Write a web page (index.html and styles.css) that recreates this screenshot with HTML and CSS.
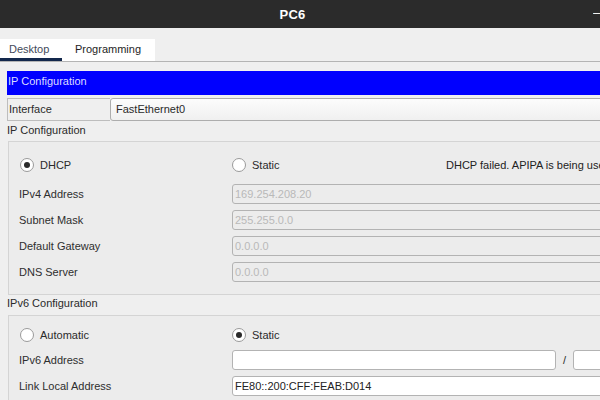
FILE: index.html
```html
<!DOCTYPE html>
<html>
<head>
<meta charset="utf-8">
<link rel="stylesheet" href="styles.css">
</head>
<body>
<div class="window">
  <div class="titlebar">
    <div class="title">PC6</div>
    <div class="minimize">–</div>
  </div>
  <div class="tabs">
    <div class="tab active">Desktop</div>
    <div class="tab">Programming</div>
  </div>
  <div class="content">
    <div class="banner">IP Configuration</div>
    <div class="iface">
      <div class="iface-label">Interface</div>
      <div class="iface-field">FastEthernet0</div>
    </div>
    <div class="section-label">IP Configuration</div>
    <div class="group g1">
      <div class="row radios">
        <label class="radio"><span class="dot checked"></span>DHCP</label>
        <label class="radio"><span class="dot"></span>Static</label>
        <span class="status">DHCP failed. APIPA is being used.</span>
      </div>
      <div class="row"><span class="lbl">IPv4 Address</span><div class="input disabled">169.254.208.20</div></div>
      <div class="row"><span class="lbl">Subnet Mask</span><div class="input disabled">255.255.0.0</div></div>
      <div class="row"><span class="lbl">Default Gateway</span><div class="input disabled">0.0.0.0</div></div>
      <div class="row"><span class="lbl">DNS Server</span><div class="input disabled">0.0.0.0</div></div>
    </div>
    <div class="section-label s2">IPv6 Configuration</div>
    <div class="group g2">
      <div class="row radios">
        <label class="radio"><span class="dot"></span>Automatic</label>
        <label class="radio"><span class="dot checked"></span>Static</label>
      </div>
      <div class="row"><span class="lbl">IPv6 Address</span>
        <div class="v6">
          <div class="input white addr"></div>
          <span class="slash">/</span>
          <div class="input white prefix"></div>
        </div>
      </div>
      <div class="row"><span class="lbl">Link Local Address</span><div class="input white dark">FE80::200:CFF:FEAB:D014</div></div>
    </div>
  </div>
</div>
</body>
</html>
```

FILE: styles.css
```css
html, body {
  margin: 0;
  padding: 0;
  background: #efefef;
  overflow: hidden;
}
body {
  width: 600px;
  height: 400px;
  font-family: "Liberation Sans", Arial, sans-serif;
  font-size: 11px;
  color: #2a2a2a;
}
.window {
  width: 680px;
}
.titlebar {
  width: 600px;
  height: 28px;
  background: #2b2b2b;
  display: flex;
  align-items: center;
  color: #fff;
}
.title {
  flex: 1;
  text-align: center;
  font-weight: bold;
  font-size: 13px;
  margin-left: -8px;
  letter-spacing: 0.2px;
}
.minimize {
  width: 7px;
  overflow: hidden;
  font-size: 13px;
  line-height: 13px;
  margin-top: -4px;
}
.tabs {
  margin-top: 11px;
  display: flex;
  width: 600px;
  border-bottom: 1px solid #b4b4b4;
  height: 22px;
}
.tab {
  background: #fff;
  height: 22px;
  line-height: 21px;
  box-sizing: border-box;
}
.tab.active {
  width: 62px;
  padding-left: 9px;
  color: #3f4a5a;
  border-bottom: 3px solid #13284c;
}
.tab + .tab {
  width: 93px;
  padding-left: 13px;
  color: #1e1e1e;
}
.content {
  margin-left: 7px;
  padding-top: 9px;
}
.banner {
  height: 24px;
  line-height: 21px;
  background: #0000ff;
  color: #dcdcff;
  padding-left: 1px;
}
.iface {
  display: flex;
  margin-top: 3px;
  height: 23px;
}
.iface-label {
  width: 103px;
  box-sizing: border-box;
  border: 1px solid #bdbdbd;
  border-right: none;
  background: #efefef;
  line-height: 21px;
  padding-left: 1px;
  color: #2a2a2a;
}
.iface-field {
  flex: 1;
  box-sizing: border-box;
  border: 1px solid #adadad;
  border-radius: 3px 0 0 3px;
  background: linear-gradient(#fcfcfc, #f0f0f0);
  line-height: 21px;
  padding-left: 5px;
}
.section-label {
  height: 20px;
  line-height: 19px;
}
.section-label.s2 {
  line-height: 17px;
}
.group {
  margin-left: 1px;
  border: 1px solid #d4d4d4;
  background: #ececec;
  padding: 13px 0 12px 10px;
  display: flex;
  flex-direction: column;
  gap: 6px;
}
.g2 {
  padding-top: 9px;
}
.row {
  display: grid;
  grid-template-columns: 213px 214px 1fr;
  height: 20px;
  align-items: center;
}
.g1 .radios {
  margin-bottom: 3px;
}
.g2 .radios {
  margin-bottom: -1px;
}
.radio {
  display: flex;
  align-items: center;
  gap: 6px;
  margin-left: 1px;
}
.radio + .radio {
  margin-left: 0;
}
.dot {
  width: 14px;
  height: 14px;
  box-sizing: border-box;
  border-radius: 50%;
  border: 1px solid #9a9a9a;
  background: #fff;
  display: flex;
  align-items: center;
  justify-content: center;
}
.dot.checked::after {
  content: "";
  width: 6px;
  height: 6px;
  border-radius: 50%;
  background: #2a2a2a;
}
.status {
  white-space: nowrap;
  color: #222;
}
.lbl {
  color: #2e2e2e;
}
.input {
  grid-column: 2 / 4;
  height: 20px;
  box-sizing: border-box;
  border: 1px solid #b3b3b3;
  border-radius: 3px 0 0 3px;
  line-height: 18px;
  padding-left: 2px;
}
.input.disabled {
  background: #ececec;
  color: #b9b9b9;
}
.input.white {
  background: #fff;
  color: #222;
}
.v6 {
  grid-column: 2 / 4;
  display: flex;
  align-items: center;
  height: 20px;
}
.v6 .addr {
  width: 324px;
  border-radius: 3px;
  flex: none;
}
.slash {
  width: 17px;
  text-align: center;
}
.v6 .prefix {
  flex: 1;
}
```
